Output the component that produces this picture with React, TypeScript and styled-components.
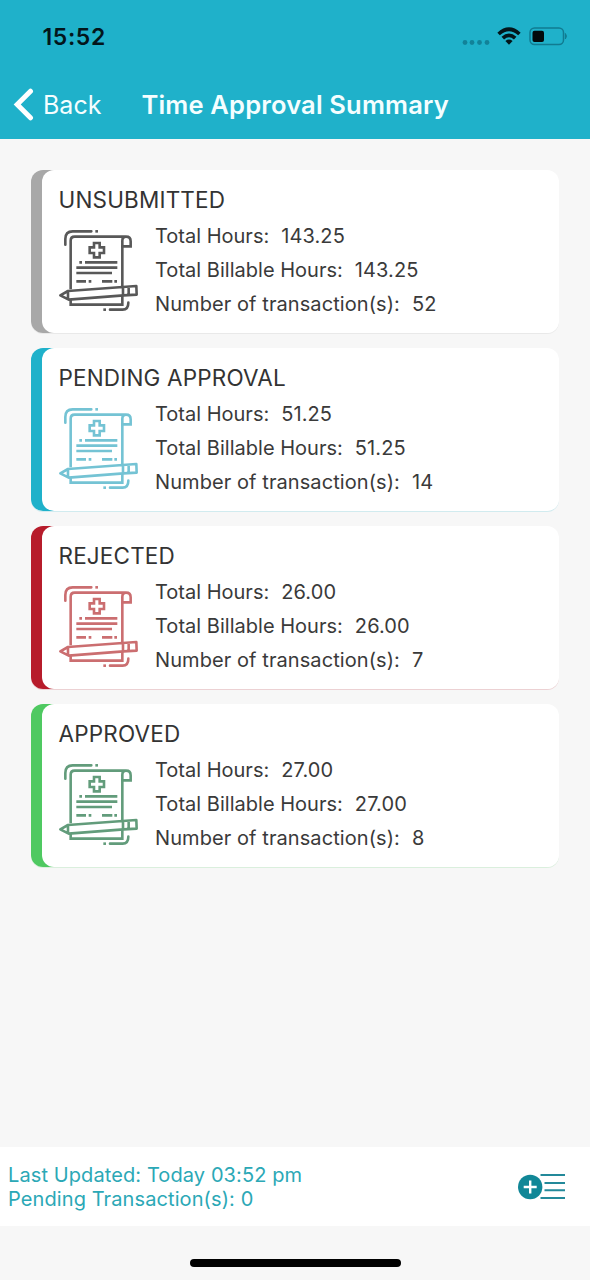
import React from 'react';
import styled, { createGlobalStyle } from 'styled-components';

const GlobalStyle = createGlobalStyle`
  * { box-sizing: border-box; }
  body { margin: 0; background: #f7f7f7; font-family: Inter, "Liberation Sans", sans-serif; }
`;

const Screen = styled.div`
  width: 590px;
  height: 1280px;
  display: flex;
  flex-direction: column;
  background: #f7f7f7;
  overflow: hidden;
`;

const Header = styled.header`
  height: 139px;
  flex: none;
  background: #1fb1ca;
  display: flex;
  flex-direction: column;
`;

const StatusBar = styled.div`
  height: 72px;
  display: flex;
  justify-content: space-between;
  padding: 0 20px 0 42.5px;
`;

const Clock = styled.div`
  font-size: 23px;
  font-weight: 600;
  line-height: 74px;
  color: #03161b;
  letter-spacing: 0.6px;
`;

const StatusIcons = styled.svg`
  display: block;
  margin-top: 20px;
`;

const NavBar = styled.div`
  height: 66px;
  display: flex;
  align-items: center;
  color: #f4feff;
  padding-left: 13px;
`;

const BackButton = styled.div`
  width: 128.5px;
  display: flex;
  align-items: center;
  gap: 9px;
  font-size: 25px;
  letter-spacing: 0;
  line-height: 34px;
`;

const Title = styled.h1`
  margin: 0;
  font-size: 25.5px;
  font-weight: 600;
  line-height: 34px;
  letter-spacing: 0.17px;
  white-space: nowrap;
`;

const CardList = styled.main`
  flex: 1;
  display: flex;
  flex-direction: column;
  gap: 15px;
  padding: 31px 31px 0;
`;

const Card = styled.section<{ $accent: string }>`
  height: 163px;
  padding-left: 11px;
  border-radius: 12px;
  background: linear-gradient(to right, ${p => p.$accent} 30px, transparent 30px);
  box-shadow: 0 1px 0 ${p => p.$accent}2c;
`;

const CardPanel = styled.div`
  height: 100%;
  border-radius: 12px;
  background: #fff;
  padding: 15px 0 0 16.5px;
`;

const CardTitle = styled.h2`
  margin: 0;
  font-size: 22.5px;
  font-weight: 400;
  line-height: 30px;
  color: #333;
  letter-spacing: 0.17px;
`;

const CardBody = styled.div`
  display: flex;
  padding-top: 4px;
`;

const DocumentSvg = styled.svg`
  flex: none;
  margin: 9px 15.5px 0 -1px;
`;

const Row = styled.div`
  display: flex;
  gap: 12px;
  height: 34px;
  line-height: 34px;
  font-size: 20px;
  color: #3a3a3a;
  white-space: nowrap;
`;

const Label = styled.span<{ $spacing: number }>`
  letter-spacing: ${p => p.$spacing}px;
`;

const Value = styled.span`
  letter-spacing: 0.1px;
`;

const Footer = styled.footer`
  height: 79px;
  flex: none;
  background: #fff;
  display: flex;
  align-items: center;
  justify-content: space-between;
  padding: 1px 24px 0 8px;
`;

const SyncLine = styled.div`
  color: #2ba8b6;
  font-size: 20px;
  line-height: 24px;
  letter-spacing: 0.1px;
`;

const HomeArea = styled.div`
  height: 54px;
  flex: none;
  display: flex;
  justify-content: center;
  padding-top: 33px;
`;

const HomeIndicator = styled.div`
  width: 211px;
  height: 8px;
  border-radius: 4px;
  background: #000;
`;

function DocumentIcon({ color }: { color: string }) {
  return (
    <DocumentSvg width="82" height="86" viewBox="24 24 246 258" fill="none" stroke={color} strokeWidth="7.8">
      <path d="M46 74V57Q46 34 68 34H124" strokeLinecap="round" />
      <path d="M136 34h8" />
      <path d="M62 208V62Q62 50 74 50H228Q242 50 242 64V79H217V62Q217 50 228 50" />
      <path d="M217 76V198M62 237V254H217V224" />
      <path d="M132 69h17v13h13v17h-13v13h-17V99h-13V82h13z" />
      <path d="M88 127h8M105 127h97M79 143h123M79 159h107M79 184h29M116 184h8M156 184h31M193 184h8" />
      <path d="M31 226L54 213L218 201L259 198L260 224L221 226L56 239ZM54 213V239M219 201V226M236 200V225" strokeLinejoin="round" />
      <path d="M160 269h8" />
      <path d="M180 269H218Q235 269 235 248" strokeLinecap="round" />
    </DocumentSvg>
  );
}

function StatusGlyphs() {
  return (
    <StatusIcons width="110" height="32" viewBox="460 20 110 32" fill="none">
      <g fill="#128299">
        <circle cx="465" cy="42.5" r="2.4" />
        <circle cx="472" cy="42.5" r="2.4" />
        <circle cx="479.5" cy="42.5" r="2.4" />
        <circle cx="487" cy="42.5" r="2.4" />
      </g>
      <g stroke="#03161b" strokeWidth="3.7">
        <path d="M498.6 34Q509 24.5 519.4 34" />
        <path d="M502.8 38.2Q509 32.5 515.2 38.2" />
      </g>
      <path d="M505.4 41Q509 38.2 512.6 41L509 44.8Z" fill="#03161b" />
      <rect x="530" y="28" width="33.5" height="16.5" rx="4.5" stroke="#117b91" strokeWidth="1.5" />
      <path d="M565.4 33.5Q567.4 36 565.4 39Z" fill="#117b91" stroke="#117b91" />
      <rect x="532.5" y="30.8" width="11.5" height="11.2" rx="2" fill="#02090b" />
    </StatusIcons>
  );
}

const cards = [
  { title: 'UNSUBMITTED', accent: '#a8a8a8', icon: '#585858', hours: '143.25', billable: '143.25', count: '52' },
  { title: 'PENDING APPROVAL', accent: '#1fb1ca', icon: '#74c3d4', hours: '51.25', billable: '51.25', count: '14' },
  { title: 'REJECTED', accent: '#b71c2b', icon: '#cb6e70', hours: '26.00', billable: '26.00', count: '7' },
  { title: 'APPROVED', accent: '#4fc961', icon: '#629c7b', hours: '27.00', billable: '27.00', count: '8' },
];

export default function App() {
  return (
    <Screen>
      <GlobalStyle />
      <Header>
        <StatusBar>
          <Clock>15:52</Clock>
          <StatusGlyphs />
        </StatusBar>
        <NavBar>
          <BackButton>
            <svg width="21" height="34" viewBox="0 0 21 34" fill="none" stroke="#fff" strokeWidth="5" strokeLinecap="round" strokeLinejoin="miter">
              <path d="M17.5 3.2L4.2 16.5L17.5 29.8" />
            </svg>
            Back
          </BackButton>
          <Title>Time Approval Summary</Title>
        </NavBar>
      </Header>
      <CardList>
        {cards.map(card => (
          <Card key={card.title} $accent={card.accent}>
            <CardPanel>
              <CardTitle>{card.title}</CardTitle>
              <CardBody>
                <DocumentIcon color={card.icon} />
                <div>
                  <Row><Label $spacing={0}>Total Hours:</Label><Value>{card.hours}</Value></Row>
                  <Row><Label $spacing={0.02}>Total Billable Hours:</Label><Value>{card.billable}</Value></Row>
                  <Row><Label $spacing={0.08}>Number of transaction(s):</Label><Value>{card.count}</Value></Row>
                </div>
              </CardBody>
            </CardPanel>
          </Card>
        ))}
      </CardList>
      <Footer>
        <div>
          <SyncLine>Last Updated: Today 03:52 pm</SyncLine>
          <SyncLine>Pending Transaction(s): 0</SyncLine>
        </div>
        <svg width="50" height="30" viewBox="516 1172 50 30" fill="none">
          <g stroke="#23899a" strokeWidth="2">
            <path d="M540.5 1175H565M544.5 1183H565M544.5 1190.3H565M540.5 1198H565" />
          </g>
          <circle cx="530.2" cy="1187" r="12.2" fill="#118797" />
          <path d="M523.7 1187H536.7M530.2 1180.5V1193.5" stroke="#fff" strokeWidth="2.4" />
        </svg>
      </Footer>
      <HomeArea>
        <HomeIndicator />
      </HomeArea>
    </Screen>
  );
}
